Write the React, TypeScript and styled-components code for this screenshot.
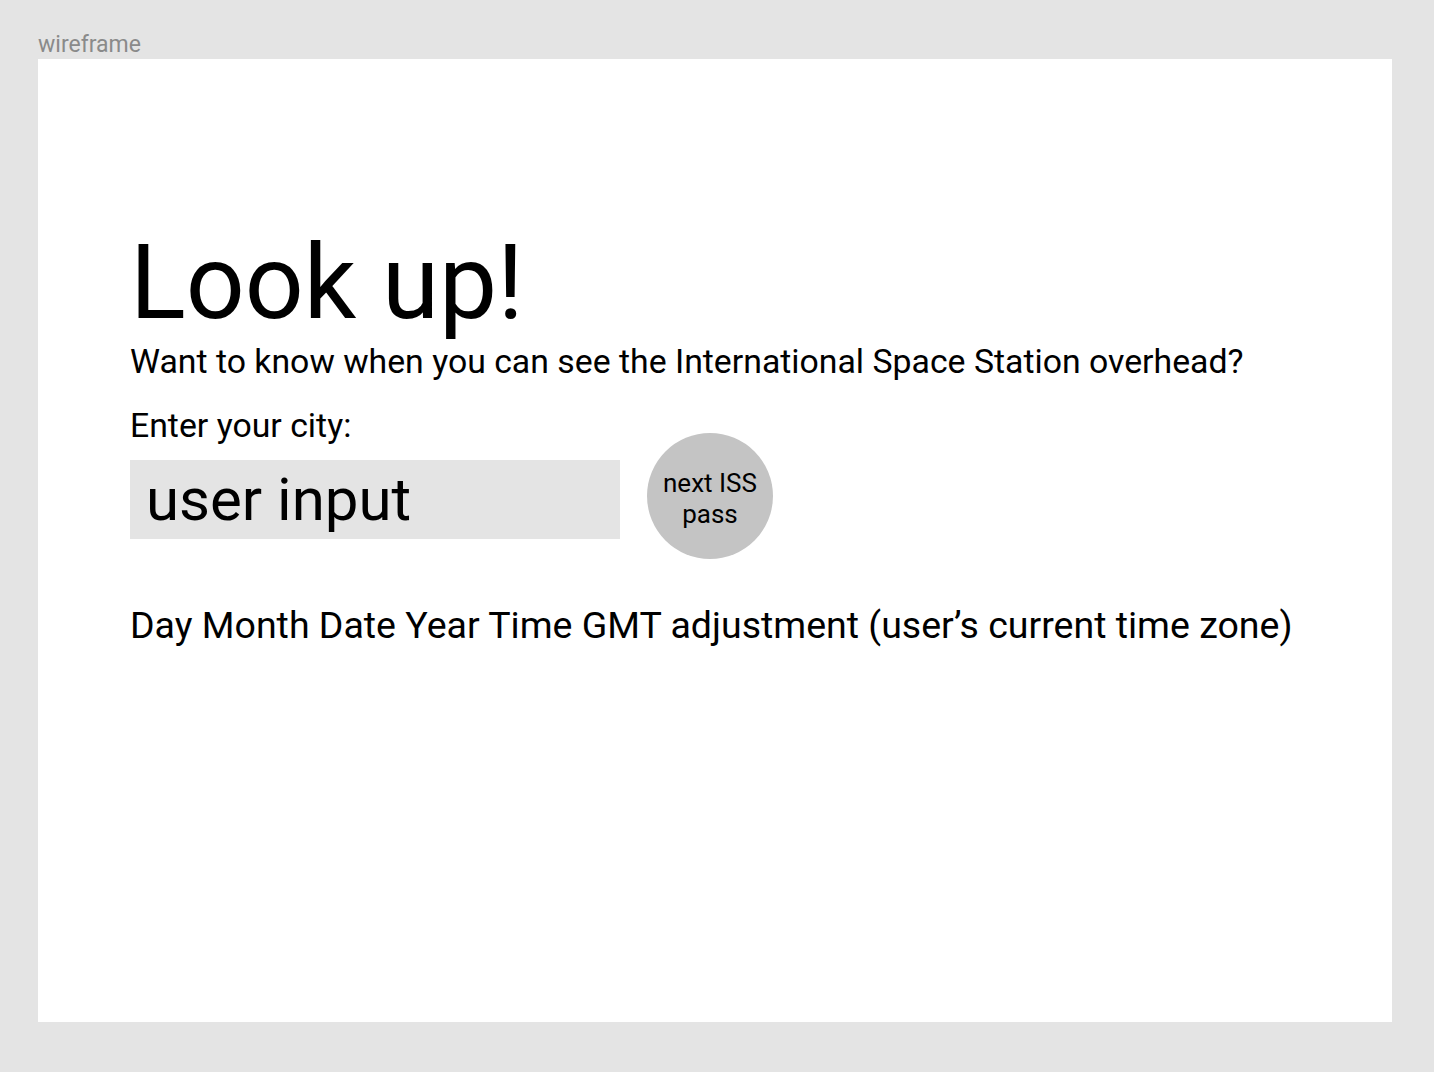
import React from "react";
import styled, { createGlobalStyle } from "styled-components";

const Global = createGlobalStyle`
  html, body { margin: 0; padding: 0; background: #e4e4e4; }
  body { font-family: Roboto, "Liberation Sans", sans-serif; color: #000; }
`;

const Page = styled.div`
  width: 1434px;
  height: 1072px;
  box-sizing: border-box;
  padding: 0 42px 50px 38px;
  display: flex;
  flex-direction: column;
`;

const FrameLabel = styled.div`
  height: 59px;
  box-sizing: border-box;
  padding-top: 33px;
  font-size: 23px;
  line-height: 24px;
  color: #8a8a8a;
`;

const Frame = styled.main`
  flex: 1;
  background: #ffffff;
  padding: 172px 0 0 92px;
  display: flex;
  flex-direction: column;
  align-items: flex-start;
`;

const Title = styled.h1`
  margin: 0;
  font-size: 103.5px;
  font-weight: 400;
  line-height: 104px;
`;

const Lead = styled.p<{ $gap: number }>`
  margin: ${(p) => p.$gap}px 0 0;
  font-size: 33.8px;
  line-height: 40px;
`;

const Row = styled.div`
  margin-top: 14px;
  display: flex;
  align-items: center;
  gap: 27px;
  height: 79px;
`;

const Input = styled.div`
  width: 490px;
  height: 79px;
  box-sizing: border-box;
  background: #e4e4e4;
  padding-left: 16px;
  font-size: 60px;
  line-height: 79px;
`;

const Circle = styled.button`
  width: 126px;
  height: 126px;
  margin: -28px 0 -20px;
  border: none;
  border-radius: 50%;
  background: #c4c4c4;
  font-family: Roboto, "Liberation Sans", sans-serif;
  font-size: 26px;
  line-height: 31px;
  color: #000;
  padding: 6px 0 0;
`;

const Result = styled.p`
  margin: 64px 0 0;
  font-size: 37.5px;
  line-height: 44px;
`;

export default function App() {
  return (
    <>
      <Global />
      <Page>
        <FrameLabel>wireframe</FrameLabel>
        <Frame>
          <Title>Look up!</Title>
          <Lead $gap={7}>
            Want to know when you can see the International Space Station overhead?
          </Lead>
          <Lead $gap={24}>Enter your city:</Lead>
          <Row>
            <Input>user input</Input>
            <Circle>
              next ISS
              <br />
              pass
            </Circle>
          </Row>
          <Result>Day Month Date Year Time GMT adjustment (user’s current time zone)</Result>
        </Frame>
      </Page>
    </>
  );
}
